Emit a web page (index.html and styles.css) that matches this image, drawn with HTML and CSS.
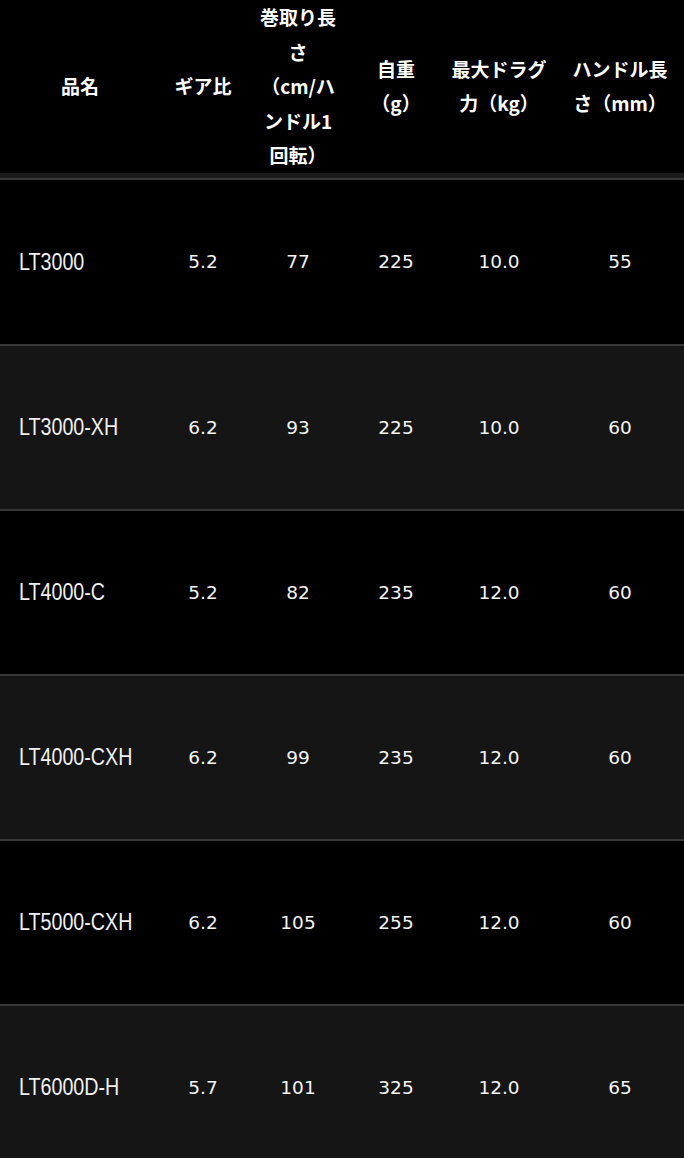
FILE: index.html
```html
<!DOCTYPE html>
<html lang="ja">
<head>
<meta charset="utf-8">
<title>スペック</title>
<link rel="stylesheet" href="styles.css">
</head>
<body>
<table class="spec">
  <colgroup>
    <col class="c-name">
    <col class="c-gear">
    <col class="c-wind">
    <col class="c-weight">
    <col class="c-drag">
    <col class="c-handle">
  </colgroup>
  <thead>
    <tr>
      <th>品名</th>
      <th>ギア比</th>
      <th>巻取り長<br>さ<br>（cm/ハ<br>ンドル1<br>回転）</th>
      <th>自重<br>（g）</th>
      <th>最大ドラグ<br>力（kg）</th>
      <th>ハンドル長<br>さ（mm）</th>
    </tr>
  </thead>
  <tbody>
    <tr>
      <td class="name"><span>LT3000</span></td><td>5.2</td><td>77</td><td>225</td><td>10.0</td><td>55</td>
    </tr>
    <tr>
      <td class="name"><span>LT3000-XH</span></td><td>6.2</td><td>93</td><td>225</td><td>10.0</td><td>60</td>
    </tr>
    <tr>
      <td class="name"><span>LT4000-C</span></td><td>5.2</td><td>82</td><td>235</td><td>12.0</td><td>60</td>
    </tr>
    <tr>
      <td class="name"><span>LT4000-CXH</span></td><td>6.2</td><td>99</td><td>235</td><td>12.0</td><td>60</td>
    </tr>
    <tr>
      <td class="name"><span>LT5000-CXH</span></td><td>6.2</td><td>105</td><td>255</td><td>12.0</td><td>60</td>
    </tr>
    <tr>
      <td class="name"><span>LT6000D-H</span></td><td>5.7</td><td>101</td><td>325</td><td>12.0</td><td>65</td>
    </tr>
  </tbody>
</table>
</body>
</html>
```

FILE: styles.css
```css
html, body {
  margin: 0;
  padding: 0;
  background: #000;
}

.spec {
  width: 684px;
  table-layout: fixed;
  border-collapse: separate;
  border-spacing: 0;
  color: #fff;
}

.c-name { width: 160px; }
.c-gear { width: 86px; }
.c-wind { width: 104px; }
.c-weight { width: 92px; }
.c-drag { width: 114px; }
.c-handle { width: 128px; }

.spec th {
  height: 172px;
  padding: 0;
  font-family: "Noto Sans CJK JP", "DejaVu Sans", sans-serif;
  font-weight: 700;
  font-size: 19px;
  line-height: 34.5px;
  text-align: center;
  vertical-align: middle;
  background: #000;
  border-bottom: 5px solid #1a1a1a;
}

.spec td {
  height: 163px;
  padding: 0;
  text-align: center;
  vertical-align: middle;
  font-family: "DejaVu Sans", "Verdana", sans-serif;
  font-size: 18.5px;
  color: #f4f4f4;
  border-top: 2px solid #383838;
  background: #000;
}

.spec tbody tr:first-child td {
  height: 164px;
}

.spec tbody tr:nth-child(even) td {
  background: #151515;
}

.spec td.name {
  text-align: left;
  padding-left: 19px;
  font-family: "Liberation Sans", "Arial", sans-serif;
  font-size: 24px;
  color: #f0f0f0;
}

.spec td.name span {
  display: inline-block;
  transform: scaleX(0.82);
  transform-origin: left center;
  white-space: nowrap;
}
```
